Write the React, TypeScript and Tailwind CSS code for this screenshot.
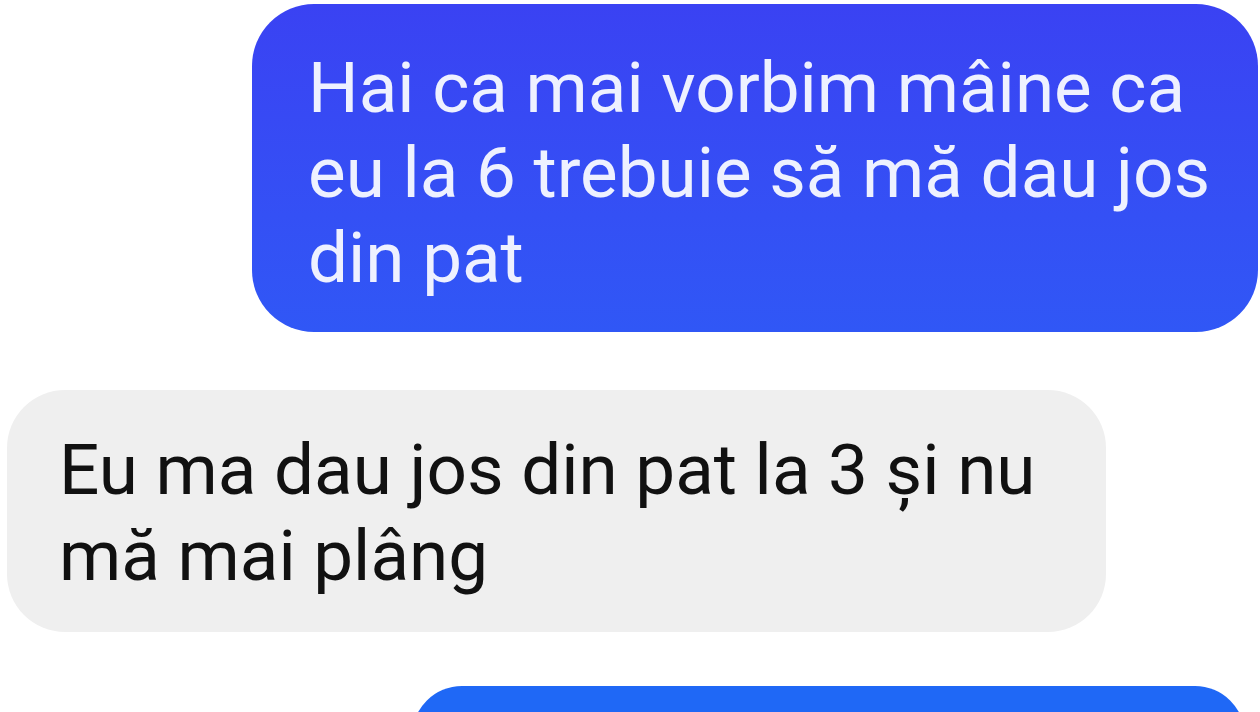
const messages = [
  {
    mine: true,
    lines: ["Hai ca mai vorbim mâine ca", "eu la 6 trebuie să mă dau jos", "din pat"],
  },
  {
    mine: false,
    lines: ["Eu ma dau jos din pat la 3 și nu", "mă mai plâng"],
  },
];

const App: React.FC = () => {
  return (
    <div className="w-[1260px] h-[712px] overflow-hidden bg-white font-['Roboto',sans-serif]">
      <div className="flex flex-col pt-[4px]">
        {/* sent */}
        <div className="ml-[252px] mr-[2px] rounded-[62px] bg-gradient-to-b from-[#3a42f3] to-[#3057f6] pl-[56px] pr-[26px] pt-[41px] pb-[32px] text-[#eef1ff] text-[71px] leading-[85px]">
          {messages[0].lines.map((l, i) => (
            <div key={i} className="whitespace-nowrap">{l}</div>
          ))}
        </div>

        {/* received */}
        <div className="mt-[58px] ml-[7px] w-[1099px] rounded-[58px] bg-[#efefef] pl-[52px] pt-[37px] pb-[33px] text-[#111111] text-[71px] leading-[86px]">
          {messages[1].lines.map((l, i) => (
            <div key={i} className="whitespace-nowrap">{l}</div>
          ))}
        </div>

        {/* next sent, cut off */}
        <div className="mt-[54px] ml-[412px] mr-[15px] h-[120px] rounded-[50px] bg-[#1f68f6]" />
      </div>
    </div>
  );
};

export default App;
